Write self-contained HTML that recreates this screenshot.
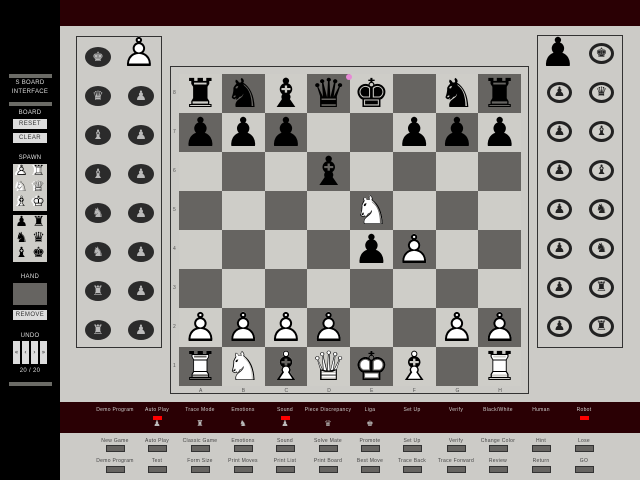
<!DOCTYPE html>
<html><head><meta charset="utf-8"><style>
*{margin:0;padding:0;box-sizing:border-box}
body{width:640px;height:480px;background:#cccbc7;position:relative;overflow:hidden;font-family:"DejaVu Sans","Liberation Sans",sans-serif}
.a{position:absolute}
#side{left:0;top:0;width:60px;height:480px;background:#000}
#top{left:60px;top:0;width:580px;height:26px;background:#2a0004}
.bar{position:absolute;left:9px;width:43px;height:4px;background:#6b6b66}
.lt{position:absolute;left:0;width:60px;text-align:center;color:#ddd;font-family:"Liberation Sans",sans-serif;font-size:6px;letter-spacing:.3px}
.btn{position:absolute;left:13px;width:34px;height:10px;background:#ddd;color:#333;font-family:"Liberation Sans",sans-serif;font-size:6px;text-align:center;line-height:10px;letter-spacing:.4px}
.sq{position:absolute;width:42.75px;height:39px;display:flex;align-items:center;justify-content:center;font-size:40px;line-height:1}
.L{background:#cecdc8}.D{background:#666461}
.w{position:relative;display:inline-block}
.w i{font-style:normal;color:#fff;position:absolute;left:0;top:0}
.w b{font-weight:normal;color:#000;position:relative}
.k{color:#000}
.cl{position:absolute;width:26px;height:20px;border-radius:50%;background:#2b2b2b;color:#bbb;font-size:13px;display:flex;align-items:center;justify-content:center}
.cr{position:absolute;width:25px;height:21px;border-radius:50%;border:3px solid #222;background:#d0cfca;color:#222;font-size:13px;display:flex;align-items:center;justify-content:center}
.rl{position:absolute;font-size:5px;color:#555;font-family:"Liberation Sans",sans-serif}
.bl{position:absolute;width:60px;text-align:center;font-size:5px;color:#ccc;font-family:"Liberation Sans",sans-serif;letter-spacing:.3px}
.gl{position:absolute;width:60px;text-align:center;font-size:5px;color:#444;font-family:"Liberation Sans",sans-serif;letter-spacing:.3px}
.gb{position:absolute;width:19px;height:7px;background:#666461;border:1px solid #333}
.red{position:absolute;width:9px;height:4px;background:#f00}
.ic{position:absolute;width:20px;text-align:center;font-size:8px;color:#bbb}
.sp{position:absolute;left:13px;width:34px;height:47px;background:#cecdc8;display:grid;grid-template-columns:1fr 1fr;font-size:14px;line-height:15px;text-align:center}
</style></head><body>
<div class="a" id="side">
<div class="bar" style="top:74px"></div>
<div class="lt" style="top:80px">S BOARD</div>
<div class="lt" style="top:89px">INTERFACE</div>
<div class="bar" style="top:102px"></div>
<div class="lt" style="top:110px">BOARD</div>
<div class="btn" style="top:119px">RESET</div>
<div class="btn" style="top:133px">CLEAR</div>
<div class="lt" style="top:155px">SPAWN</div>
<div class="sp" style="top:164px"><span class="w"><i>♟</i><b>♙</b></span><span class="w"><i>♜</i><b>♖</b></span><span class="w"><i>♞</i><b>♘</b></span><span class="w"><i>♛</i><b>♕</b></span><span class="w"><i>♝</i><b>♗</b></span><span class="w"><i>♚</i><b>♔</b></span></div>
<div class="sp" style="top:215px"><span>♟</span><span>♜</span><span>♞</span><span>♛</span><span>♝</span><span>♚</span></div>
<div class="lt" style="top:274px">HAND</div>
<div class="a" style="left:13px;top:283px;width:34px;height:22px;background:#666461"></div>
<div class="btn" style="top:310px">REMOVE</div>
<div class="lt" style="top:333px">UNDO</div>
<div class="a" style="left:13px;top:341px;width:7px;height:23px;background:#ddd;font-size:6px;color:#333;line-height:23px;text-align:center">«</div>
<div class="a" style="left:22px;top:341px;width:7px;height:23px;background:#ddd;font-size:6px;color:#333;line-height:23px;text-align:center">‹</div>
<div class="a" style="left:31px;top:341px;width:7px;height:23px;background:#ddd;font-size:6px;color:#333;line-height:23px;text-align:center">›</div>
<div class="a" style="left:40px;top:341px;width:7px;height:23px;background:#ddd;font-size:6px;color:#333;line-height:23px;text-align:center">»</div>
<div class="lt" style="top:368px">20 / 20</div>
<div class="bar" style="top:382px"></div>
</div>
<div class="a" id="top"></div>

<div class="a" style="left:76px;top:36px;width:86px;height:312px;border:1px solid #333"></div>
<div class="a" style="left:537px;top:35px;width:86px;height:313px;border:1px solid #333"></div>
<div class="a" style="left:170px;top:66px;width:359px;height:328px;border:1px solid #333"></div>

<div class="cl" style="left:85px;top:47px">♚</div>
<div class="a" style="left:121px;top:33px;font-size:40px;line-height:1"><span class="w"><i>♟</i><b>♙</b></span></div>
<div class="cl" style="left:85px;top:86px">♛</div><div class="cl" style="left:128px;top:86px">♟</div>
<div class="cl" style="left:85px;top:125px">♝</div><div class="cl" style="left:128px;top:125px">♟</div>
<div class="cl" style="left:85px;top:164px">♝</div><div class="cl" style="left:128px;top:164px">♟</div>
<div class="cl" style="left:85px;top:203px">♞</div><div class="cl" style="left:128px;top:203px">♟</div>
<div class="cl" style="left:85px;top:242px">♞</div><div class="cl" style="left:128px;top:242px">♟</div>
<div class="cl" style="left:85px;top:281px">♜</div><div class="cl" style="left:128px;top:281px">♟</div>
<div class="cl" style="left:85px;top:320px">♜</div><div class="cl" style="left:128px;top:320px">♟</div>

<div class="a" style="left:540px;top:33px;font-size:40px;line-height:1">♟</div>
<div class="cr" style="left:589px;top:43px">♚</div>
<div class="cr" style="left:547px;top:82px">♟</div><div class="cr" style="left:589px;top:82px">♛</div>
<div class="cr" style="left:547px;top:121px">♟</div><div class="cr" style="left:589px;top:121px">♝</div>
<div class="cr" style="left:547px;top:160px">♟</div><div class="cr" style="left:589px;top:160px">♝</div>
<div class="cr" style="left:547px;top:199px">♟</div><div class="cr" style="left:589px;top:199px">♞</div>
<div class="cr" style="left:547px;top:238px">♟</div><div class="cr" style="left:589px;top:238px">♞</div>
<div class="cr" style="left:547px;top:277px">♟</div><div class="cr" style="left:589px;top:277px">♜</div>
<div class="cr" style="left:547px;top:316px">♟</div><div class="cr" style="left:589px;top:316px">♜</div>

<div id="board"></div>
<div class="a" style="left:346px;top:74px;width:6px;height:6px;border-radius:50%;background:#e68ad6"></div>

<div class="a" style="left:60px;top:402px;width:580px;height:31px;background:#2a0004"></div>
<div id="bot"></div>

<script>
var pos=["rnbqk.nr","ppp..ppp","...b....","....N...","....pP..","........","PPPP..PP","RNBQKB.R"];
var W={K:"♔",Q:"♕",R:"♖",B:"♗",N:"♘",P:"♙"},F={K:"♚",Q:"♛",R:"♜",B:"♝",N:"♞",P:"♟"};
var h="";
for(var r=0;r<8;r++)for(var c=0;c<8;c++){
 var ch=pos[r][c],x=179+c*42.75,y=74+r*39,cls=((r+c)%2==0)?"L":"D",inner="";
 if(ch!="."){var u=ch.toUpperCase();
  if(ch==u)inner='<span class="w"><i>'+F[u]+'</i><b>'+W[u]+'</b></span>';
  else inner='<span class="k">'+F[u]+'</span>';}
 h+='<div class="sq '+cls+'" style="left:'+x+'px;top:'+y+'px">'+inner+'</div>';
}
for(var r=0;r<8;r++)h+='<div class="rl" style="left:173px;top:'+(90+r*39)+'px">'+(8-r)+'</div>';
var fl="ABCDEFGH";
for(var c=0;c<8;c++)h+='<div class="rl" style="left:'+(199+c*42.75)+'px;top:388px">'+fl[c]+'</div>';
document.getElementById("board").innerHTML=h;
var cx=[115,157,200,243,285,328,370,412,456,498,541,584];
var t1=["Demo Program","Auto Play","Trace Mode","Emotions","Sound","Piece Discrepancy","Liga","Set Up","Verify","Black/White","Human","Robot"];
var ic=["","♟","♜","♞","♟","♛","♚","","","","",""];
var r1=["New Game","Auto Play","Classic Game","Emotions","Sound","Solve Mate","Promote","Set Up","Verify","Change Color","Hint","Lose"];
var r2=["Demo Program","Test","Form Size","Print Moves","Print List","Print Board","Best Move","Trace Back","Trace Forward","Review","Return","GO"];
var b="";
for(var i=0;i<12;i++){
 b+='<div class="bl" style="left:'+(cx[i]-30)+'px;top:407px">'+t1[i]+'</div>';
 if(ic[i])b+='<div class="ic" style="left:'+(cx[i]-10)+'px;top:419px">'+ic[i]+'</div>';
 if(i==1||i==4||i==11)b+='<div class="red" style="left:'+(cx[i]-4)+'px;top:416px"></div>';
 b+='<div class="gl" style="left:'+(cx[i]-30)+'px;top:438px">'+r1[i]+'</div>';
 b+='<div class="gb" style="left:'+(cx[i]-9)+'px;top:445px"></div>';
 b+='<div class="gl" style="left:'+(cx[i]-30)+'px;top:458px">'+r2[i]+'</div>';
 b+='<div class="gb" style="left:'+(cx[i]-9)+'px;top:466px"></div>';
}
document.getElementById("bot").innerHTML=b;
</script>
</body></html>
